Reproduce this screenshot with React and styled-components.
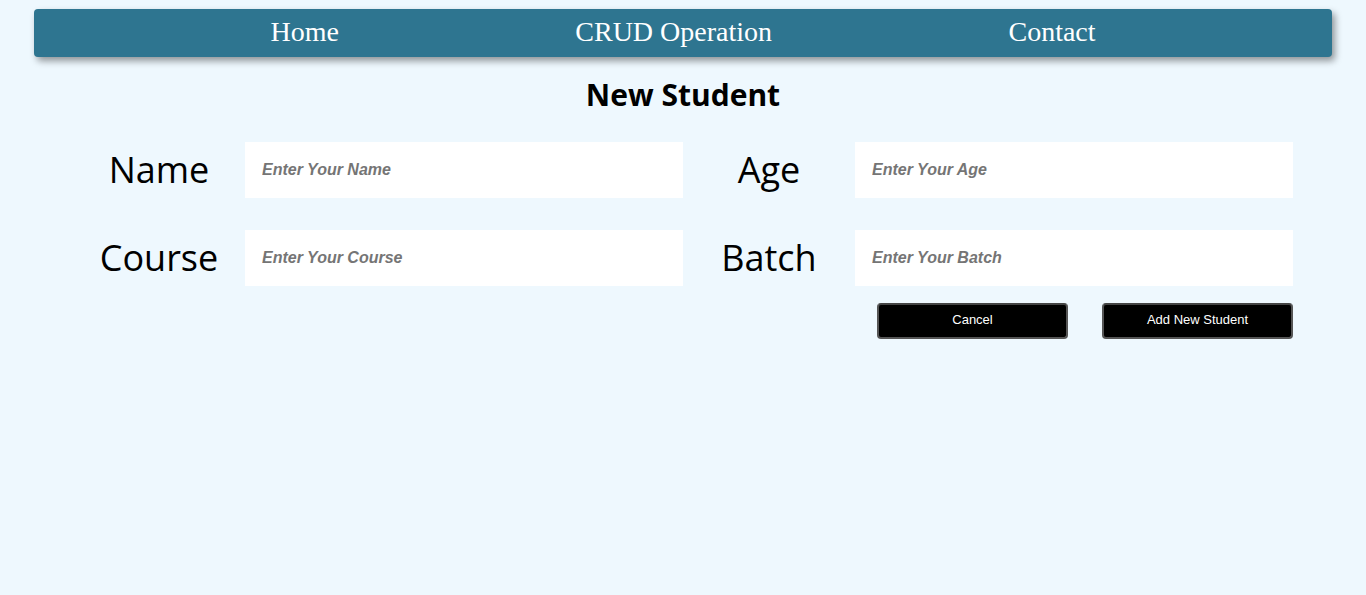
import React from 'react'
import styled, { createGlobalStyle } from 'styled-components'

const GlobalStyle = createGlobalStyle`
body{
  margin:0;
  background:#eef8fe;
  font-family:"Open Sans", sans-serif;
}
`

function App() {
    return (
        <>
            <GlobalStyle />
            <Page>
                <Navbar>
                    <NavLink>Home</NavLink>
                    <NavLink>CRUD Operation</NavLink>
                    <NavLink>Contact</NavLink>
                </Navbar>
                <Title>New Student</Title>
                <Form>
                    <Label>Name</Label>
                    <Input placeholder="Enter Your Name" />
                    <Label>Age</Label>
                    <Input placeholder="Enter Your Age" />
                    <Label>Course</Label>
                    <Input placeholder="Enter Your Course" />
                    <Label>Batch</Label>
                    <Input placeholder="Enter Your Batch" />
                </Form>
                <Actions>
                    <Button>Cancel</Button>
                    <Button>Add New Student</Button>
                </Actions>
            </Page>
        </>
    )
}

export default App

const Page = styled.div`
padding:9px 34px 0 34px;
`
const Navbar = styled.nav`
height:48px;
background:#2e7590;
border-radius:4px;
box-shadow:3px 4px 7px rgba(0,0,0,0.4);
display:flex;
align-items:center;
justify-content:space-evenly;
`
const NavLink = styled.a`
color:white;
font-family:"Liberation Serif", serif;
font-size:28px;
line-height:30px;
margin-top:-2px;
cursor:pointer;
`
const Title = styled.h2`
margin:20px 0 0 0;
text-align:center;
font-size:30px;
font-weight:700;
color:black;
line-height:36px;
`
const Form = styled.div`
display:grid;
grid-template-columns:172px 438px 172px 438px;
justify-content:center;
row-gap:32px;
margin-top:29px;
`
const Label = styled.label`
display:flex;
align-items:center;
justify-content:center;
font-size:36px;
color:black;
margin-top:-2px;
`
const Input = styled.input`
height:56px;
border:none;
outline:none;
background:white;
padding:0 17px;
box-sizing:border-box;
font-family:"Liberation Sans", Arial, sans-serif;
font-size:16px;
&::placeholder{
  color:#757575;
  font-style:italic;
  font-weight:700;
}
`
const Actions = styled.div`
display:flex;
justify-content:flex-end;
gap:34px;
margin-top:17px;
padding-right:39px;
`
const Button = styled.button`
width:191px;
height:36px;
padding:0 0 3px 0;
background:black;
color:white;
border:2px solid #555;
border-top-color:#444;
border-radius:4px;
font-family:"Liberation Sans", Arial, sans-serif;
font-size:13px;
font-weight:500;
cursor:pointer;
`
